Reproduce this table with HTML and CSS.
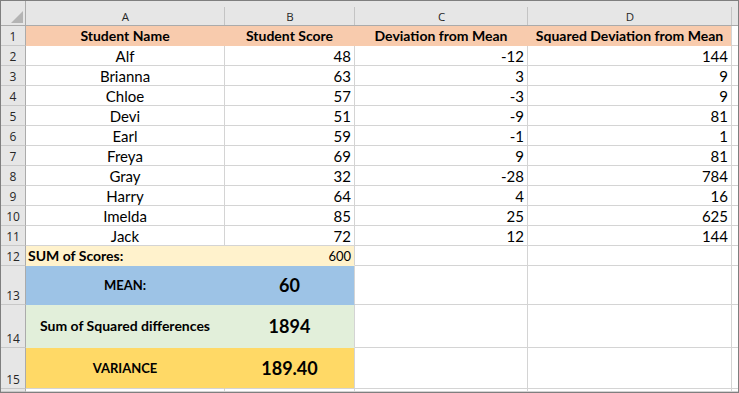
FILE: index.html
```html
<!DOCTYPE html>
<html>
<head>
<meta charset="utf-8">
<link rel="stylesheet" href="styles.css">
</head>
<body>
<div class="sheet">
  <div class="hd corner"><span class="tri"></span></div>
  <div class="hd col">A</div>
  <div class="hd col">B</div>
  <div class="hd col">C</div>
  <div class="hd col">D</div>
  <div class="hd col last"></div>

  <div class="rh">1</div>
  <div class="c ctr b peach">Student Name</div>
  <div class="c ctr b peach">Student Score</div>
  <div class="c ctr b peach">Deviation from Mean</div>
  <div class="c ctr b peach edge">Squared Deviation from Mean</div>
  <div class="c last"></div>

  <div class="rh">2</div><div class="c ctr">Alf</div><div class="c num">48</div><div class="c num">-12</div><div class="c num">144</div><div class="c last"></div>
  <div class="rh">3</div><div class="c ctr">Brianna</div><div class="c num">63</div><div class="c num">3</div><div class="c num">9</div><div class="c last"></div>
  <div class="rh">4</div><div class="c ctr">Chloe</div><div class="c num">57</div><div class="c num">-3</div><div class="c num">9</div><div class="c last"></div>
  <div class="rh">5</div><div class="c ctr">Devi</div><div class="c num">51</div><div class="c num">-9</div><div class="c num">81</div><div class="c last"></div>
  <div class="rh">6</div><div class="c ctr">Earl</div><div class="c num">59</div><div class="c num">-1</div><div class="c num">1</div><div class="c last"></div>
  <div class="rh">7</div><div class="c ctr">Freya</div><div class="c num">69</div><div class="c num">9</div><div class="c num">81</div><div class="c last"></div>
  <div class="rh">8</div><div class="c ctr">Gray</div><div class="c num">32</div><div class="c num">-28</div><div class="c num">784</div><div class="c last"></div>
  <div class="rh">9</div><div class="c ctr">Harry</div><div class="c num">64</div><div class="c num">4</div><div class="c num">16</div><div class="c last"></div>
  <div class="rh">10</div><div class="c ctr">Imelda</div><div class="c num">85</div><div class="c num">25</div><div class="c num">625</div><div class="c last"></div>
  <div class="rh">11</div><div class="c ctr">Jack</div><div class="c num">72</div><div class="c num">12</div><div class="c num">144</div><div class="c last"></div>

  <div class="rh">12</div>
  <div class="c left b cream">SUM of Scores:</div>
  <div class="c num cream edge sm-num">600</div>
  <div class="c"></div><div class="c"></div><div class="c last"></div>

  <div class="rh">13</div>
  <div class="c mid b blue small">MEAN:</div>
  <div class="c mid b big blue edge">60</div>
  <div class="c"></div><div class="c"></div><div class="c last"></div>

  <div class="rh">14</div>
  <div class="c mid b green">Sum of Squared differences</div>
  <div class="c mid b big green edge">1894</div>
  <div class="c"></div><div class="c"></div><div class="c last"></div>

  <div class="rh">15</div>
  <div class="c mid b yellow small bottom">VARIANCE</div>
  <div class="c mid b big yellow edge bottom">189.40</div>
  <div class="c"></div><div class="c"></div><div class="c last"></div>

  <div class="rh"></div><div class="c"></div><div class="c"></div><div class="c"></div><div class="c"></div><div class="c last"></div>
</div>
</body>
</html>
```

FILE: styles.css
```css
* { box-sizing: border-box; }
html, body { margin: 0; padding: 0; background: #fff; }

.sheet {
  width: 739px;
  height: 393px;
  border: 1px solid #7f7f7f;
  display: grid;
  grid-template-columns: 25px 199px 130px 173px 204px 6px;
  grid-template-rows: 25px repeat(12, 20px) 39px 43px 41px 3px;
  overflow: hidden;
  font-family: Lato, "Open Sans", sans-serif;
  font-size: 15px;
  color: #000;
}

.hd {
  background: #e6e6e6;
  border-bottom: 1px solid #ababab;
  position: relative;
  font-family: "Open Sans", "DejaVu Sans", sans-serif;
  font-size: 11.5px;
  color: #262626;
  display: flex;
  align-items: flex-end;
  justify-content: center;
  padding-bottom: 1px;
}
.hd.col::after {
  content: "";
  position: absolute;
  right: 0;
  top: 6px;
  bottom: 0;
  width: 1px;
  background: #c4c4c4;
}
.hd.col.last::after { display: none; }
.corner { border-right: 1px solid #ababab; }
.tri {
  position: absolute;
  right: 2px;
  bottom: 2px;
  width: 0;
  height: 0;
  border-left: 12px solid transparent;
  border-bottom: 12px solid #b4b4b4;
}

.rh {
  background: #e6e6e6;
  border-right: 1px solid #ababab;
  border-bottom: 1px solid #c8c8c8;
  font-family: "Open Sans", "DejaVu Sans", sans-serif;
  font-size: 12px;
  color: #262626;
  display: flex;
  align-items: flex-end;
  justify-content: center;
  line-height: 14px;
  padding-bottom: 1px;
}

.c {
  border-right: 1px solid #d4d4d4;
  border-bottom: 1px solid #d4d4d4;
  display: flex;
  align-items: flex-end;
  line-height: 16px;
  padding: 0 3px 1px 3px;
  white-space: nowrap;
  overflow: hidden;
}
.c.last { border-right: none; }
.ctr { justify-content: center; }
.num { justify-content: flex-end; }
.left { justify-content: flex-start; padding-left: 2px; }
.mid { justify-content: center; align-items: center; padding-bottom: 0; }
.b { font-weight: 700; font-size: 14px; }
.big { font-size: 18px; }
.small { font-size: 13px; }
.sm-num { font-size: 13px; }

.peach { background: #f8cbad; border-right-color: transparent; border-bottom-color: transparent; }
.cream { background: #fff2cc; border-right-color: transparent; border-bottom-color: transparent; }
.blue { background: #9dc3e6; border-right-color: transparent; border-bottom-color: transparent; }
.green { background: #e2efda; border-right-color: transparent; border-bottom-color: transparent; }
.yellow { background: #ffd966; border-right-color: transparent; border-bottom-color: transparent; }
.edge { border-right-color: #d4d4d4; }
.bottom { border-bottom-color: #d4d4d4; }
```
